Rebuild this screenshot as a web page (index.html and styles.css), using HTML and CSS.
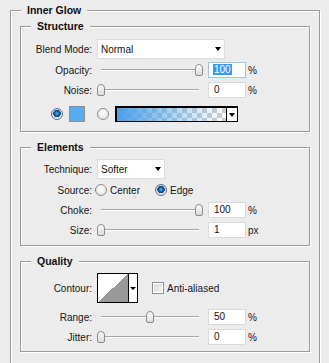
FILE: index.html
```html
<!DOCTYPE html>
<html lang="en">
<head>
    <meta charset="UTF-8">
    <title>Inner Glow</title>
    <link rel="stylesheet" href="styles.css">
</head>
<body>
<section class="panel">
    <fieldset class="group outer">
        <legend>Inner Glow</legend>

        <fieldset class="group structure">
            <legend>Structure</legend>
            <div class="row select-row">
                <label class="lbl">Blend Mode:</label>
                <div class="select wide"><span>Normal</span><i class="arrow"></i></div>
            </div>
            <div class="row">
                <label class="lbl">Opacity:</label>
                <div class="slider"><span class="thumb" style="left: 98px"></span></div>
                <div class="num focus"><span class="hl">100</span></div>
                <span class="unit">%</span>
            </div>
            <div class="row">
                <label class="lbl">Noise:</label>
                <div class="slider"><span class="thumb" style="left: 0px"></span></div>
                <div class="num">0</div>
                <span class="unit">%</span>
            </div>
            <div class="row color-row">
                <span class="radio on"></span>
                <span class="swatch"></span>
                <span class="radio"></span>
                <div class="gradient">
                    <span class="ramp"></span>
                    <span class="drop"><i class="arrow"></i></span>
                </div>
            </div>
        </fieldset>

        <fieldset class="group elements">
            <legend>Elements</legend>
            <div class="row select-row">
                <label class="lbl">Technique:</label>
                <div class="select short"><span>Softer</span><i class="arrow"></i></div>
            </div>
            <div class="row source">
                <label class="lbl">Source:</label>
                <span class="radio"></span><span class="opt">Center</span>
                <span class="radio on"></span><span class="opt">Edge</span>
            </div>
            <div class="row">
                <label class="lbl">Choke:</label>
                <div class="slider"><span class="thumb" style="left: 98px"></span></div>
                <div class="num">100</div>
                <span class="unit">%</span>
            </div>
            <div class="row">
                <label class="lbl">Size:</label>
                <div class="slider"><span class="thumb" style="left: 0px"></span></div>
                <div class="num">1</div>
                <span class="unit">px</span>
            </div>
        </fieldset>

        <fieldset class="group quality">
            <legend>Quality</legend>
            <div class="row contour-row">
                <label class="lbl">Contour:</label>
                <div class="contour">
                    <span class="curve"></span>
                    <span class="drop"><i class="arrow small"></i></span>
                </div>
                <span class="check"></span><span class="opt">Anti-aliased</span>
            </div>
            <div class="row">
                <label class="lbl">Range:</label>
                <div class="slider"><span class="thumb" style="left: 49px"></span></div>
                <div class="num">50</div>
                <span class="unit">%</span>
            </div>
            <div class="row">
                <label class="lbl">Jitter:</label>
                <div class="slider"><span class="thumb" style="left: 0px"></span></div>
                <div class="num">0</div>
                <span class="unit">%</span>
            </div>
        </fieldset>
    </fieldset>
</section>
</body>
</html>
```

FILE: styles.css
```css
*{
    box-sizing: border-box;
}
body{
    margin: 0;
    background: #ececec;
    font-family: "Liberation Sans", Arial, sans-serif;
    font-size: 10px;
    color: #151515;
}
.panel{
    height: 363px;
    overflow: hidden;
    padding: 4px 0 0 10px;
}

/* group boxes */
.group{
    margin: 0;
    padding: 6px 0 8px 0;
    min-width: 0;
    border: 1px solid #9b9b9b;
    box-shadow: 1px 1px 0 #fff, inset 1px 1px 0 #fff;
}
.group legend{
    margin-left: 10px;
    padding: 0 6px;
    font-size: 10.5px;
    font-weight: bold;
    line-height: 12px;
    color: #101010;
    background: #ececec;
}
.outer{
    width: 310px;
    padding: 4px 9px 40px;
}
.outer > legend{
    margin-left: 1px;
}
.group + .group{
    margin-top: 9px;
}
.structure{
    padding-top: 7px;
    padding-bottom: 9px;
}
.elements{
    padding-bottom: 7px;
}
.quality{
    padding-bottom: 6px;
}

/* rows */
.row{
    display: flex;
    align-items: center;
    height: 16px;
}
.row + .row{
    margin-top: 4px;
}
.select-row{
    height: 20px;
}
.select-row + .row{
    margin-top: 3px;
}
.lbl{
    width: 71px;
    margin-right: 5px;
    text-align: right;
}
.source .lbl{
    margin-right: 3px;
}
.row.color-row{
    margin-top: 8px;
    padding-left: 30px;
}
.contour-row{
    height: 30px;
}
.row.contour-row + .row{
    margin-top: 6px;
}

/* drop-down */
.select{
    display: flex;
    align-items: center;
    justify-content: space-between;
    height: 20px;
    padding: 0 3px;
    background: #fff;
    border: 1px solid #dcdcdc;
}
.wide{
    width: 128px;
}
.short{
    width: 68px;
}
.arrow{
    width: 0;
    height: 0;
    border-top: 4px solid #000;
    border-left: 3.5px solid transparent;
    border-right: 3.5px solid transparent;
}
.arrow.small{
    border-top-width: 3px;
    border-left-width: 3px;
    border-right-width: 3px;
}

/* slider */
.slider{
    position: relative;
    width: 106px;
    height: 16px;
    margin-right: 5px;
}
.slider::before{
    content: "";
    position: absolute;
    left: 4px;
    right: 4px;
    top: 7px;
    height: 1px;
    background: #a5a5a5;
    box-shadow: 0 1px 0 #fff;
}
.thumb{
    position: absolute;
    top: 2px;
    width: 8px;
    height: 12px;
    border: 1px solid #8c8c8c;
    border-radius: 4px 4px 2px 2px;
    background: linear-gradient(#fdfdfd, #dadada);
}

/* number fields */
.num{
    width: 38px;
    height: 16px;
    padding-left: 5px;
    line-height: 14px;
    background: #fff;
    border: 1px solid #dadada;
}
.num.focus{
    border-color: #9fc4ec;
}
.hl{
    padding: 0 1px;
    margin-left: -1px;
    color: #fff;
    background: #3399ff;
}
.unit{
    margin-left: 2px;
}

/* radios, checkbox */
.radio{
    flex: none;
    width: 12px;
    height: 12px;
    border-radius: 50%;
    border: 1px solid #8d8d8d;
    background: radial-gradient(circle at 50% 40%, #fff 0, #e4e4e4 6px);
}
.radio.on{
    border-color: #55708c;
    background: radial-gradient(circle at 50% 45%, #5fb4f0 0, #1866b0 2px, #0b3e70 3.5px, #d6dde4 4px, #f6f6f6 6px);
}
.opt{
    margin-left: 3px;
    margin-right: 15px;
}
.check{
    flex: none;
    width: 12px;
    height: 12px;
    margin-left: 14px;
    border: 1px solid #8f8f8f;
    background: linear-gradient(135deg, #d8d8d8, #f4f4f4);
    box-shadow: inset 0 0 0 1px #fff;
}

/* colour and gradient */
.swatch{
    width: 16px;
    height: 16px;
    margin: 0 12px 0 6px;
    border: 1px solid #8e8e8e;
    background: #58adee;
}
.gradient{
    display: flex;
    width: 123px;
    height: 16px;
    margin-left: 6px;
    border: solid #000;
    border-width: 2px 1px 1px 2px;
}
.ramp{
    flex: 1;
    background:
        linear-gradient(to right, #4c9fea, rgba(88, 173, 238, 0.35) 65%, rgba(88, 173, 238, 0)),
        conic-gradient(#cdcdcd 25%, #fff 0 50%, #cdcdcd 0 75%, #fff 0);
    background-size: auto, 10px 10px;
}
.drop{
    display: flex;
    align-items: center;
    justify-content: center;
    width: 11px;
    background: #fff;
    border-left: 1px solid #000;
}

/* contour thumbnail */
.contour{
    display: flex;
    width: 41px;
    height: 30px;
    border: 1px solid #000;
}
.curve{
    width: 30px;
    background: linear-gradient(to top left, #999 50%, #fff 50%);
}
.contour .drop{
    width: auto;
    flex: 1;
}
```
